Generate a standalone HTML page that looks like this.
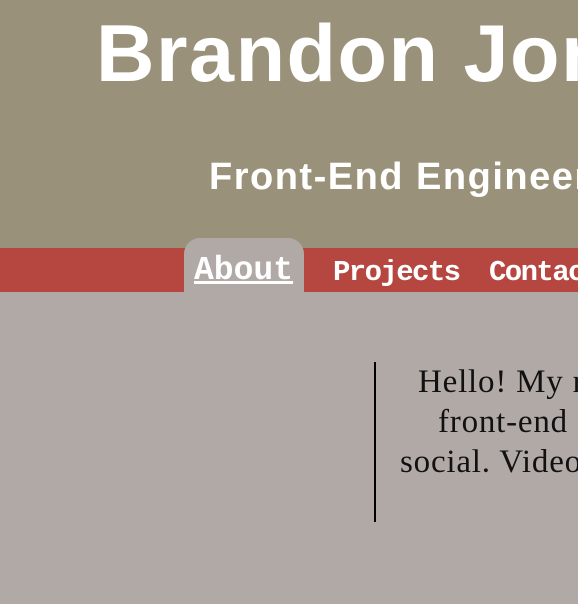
<!DOCTYPE html>
<html><head><style>
html,body{margin:0;padding:0;width:578px;height:604px;overflow:hidden;background:#b1a9a6;position:relative;}
.a{position:absolute;white-space:nowrap;}
#hd{position:absolute;left:0;top:0;width:578px;height:248px;background:#9a917a;}
#nav{position:absolute;left:0;top:248px;width:578px;height:44px;background:#b64640;}
#tab{position:absolute;left:184px;top:238px;width:120px;height:54px;background:#b1a9a6;border-radius:16px 16px 0 0;}
.t{font-family:"Liberation Sans",sans-serif;font-weight:bold;color:#fff;}
.n{font-family:"Liberation Mono",monospace;font-weight:bold;color:#fff;font-size:29px;}
.b{font-family:"Liberation Serif",serif;font-size:33px;color:#111;letter-spacing:0.8px;}
#wrap{position:absolute;left:0;top:0;width:578px;height:604px;overflow:hidden;}
</style></head><body><div id="wrap">
<div class="a" style="left:0;top:0;width:578px;height:248px;background:#9a917a;"></div>
<div class="a t" style="left:96px;top:8px;font-size:81px;letter-spacing:1.5px;">Brandon Jones</div>
<div class="a t" style="left:209px;top:156px;font-size:38px;letter-spacing:1.5px;">Front-End Engineer</div>
<div id="nav"></div>
<div id="tab"></div>
<div class="a n" style="left:194px;top:252px;font-size:33px;letter-spacing:0px;text-decoration:underline;text-underline-offset:2px;">About</div>
<div class="a n" style="left:333px;top:256px;letter-spacing:-1.6px;">Projects</div>
<div class="a n" style="left:489px;top:256px;letter-spacing:-1.6px;">Contact</div>
<div class="a" style="left:374px;top:362px;width:2px;height:160px;background:#000;"></div>
<div class="a b" style="left:418px;top:364px;">Hello! My name</div>
<div class="a b" style="left:438px;top:404px;">front-end engineer</div>
<div class="a b" style="left:400px;top:444px;">social. Video games</div>
</div></body></html>
